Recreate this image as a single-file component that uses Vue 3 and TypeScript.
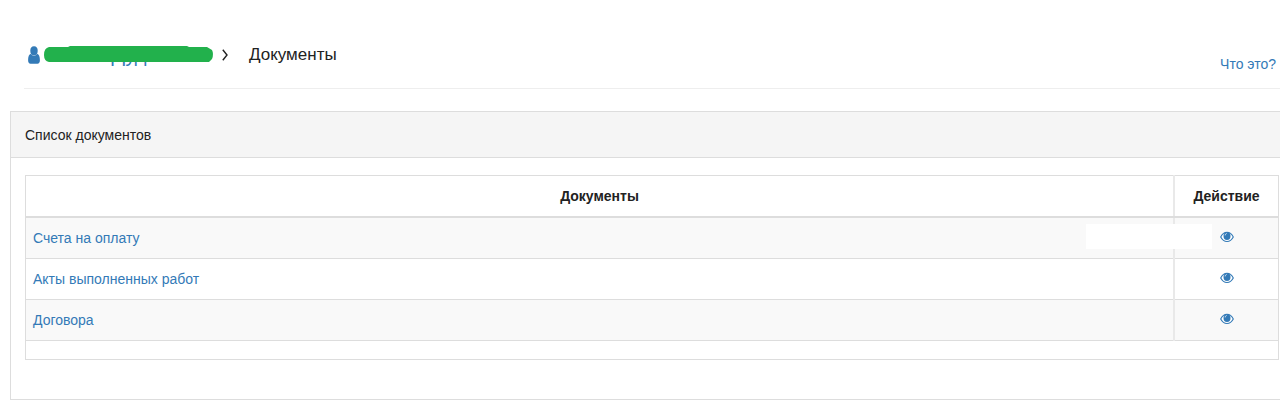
<script setup lang="ts">
interface DocumentRow {
  id: string
  title: string
  masked: boolean
}

const rows: DocumentRow[] = [
  { id: 'invoices', title: 'Счета на оплату', masked: true },
  { id: 'acts', title: 'Акты выполненных работ', masked: false },
  { id: 'contracts', title: 'Договора', masked: false },
]
</script>

<template>
  <main class="page">
    <header class="top">
      <nav class="crumbs" aria-label="Навигация">
        <a class="user" href="#user">
          <svg class="user-icon" viewBox="0 0 12 18" aria-hidden="true">
            <ellipse cx="6" cy="4.700" rx="3.700" ry="4.500" />
            <path d="M2.900 7.700C1 8 .1 10.800 .1 14.200C.1 16.500 1 17.700 2.500 17.700H9.500C11 17.700 11.900 16.500 11.900 14.200C11.900 10.800 11 8 9.100 7.700C8.300 8.900 7.300 9.600 6 9.600S3.700 8.900 2.900 7.700Z" />
          </svg>
          <span class="user-name">
            <span>Дуд</span>
            <svg class="marker" viewBox="0 0 170 16" preserveAspectRatio="none" aria-hidden="true">
              <path d="M5 1H24L26 0H143L145 1H163L168 4Q170 8 168 13L165 16H5Q0 15 0 9Q0 2 5 1Z" />
            </svg>
          </span>
        </a>
        <svg class="chevron" viewBox="0 0 6 12" aria-hidden="true">
          <path d="M.8 .8L5 6L.8 11.200" />
        </svg>
        <h1>Документы</h1>
      </nav>
      <a class="help" href="#help">Что это?</a>
    </header>

    <section class="panel">
      <h2 class="panel-head">Список документов</h2>
      <div class="panel-body">
        <table>
          <thead>
            <tr>
              <th scope="col">Документы</th>
              <th scope="col" class="action">Действие</th>
            </tr>
          </thead>
          <tbody>
            <tr v-for="row in rows" :key="row.id">
              <td><a :href="'#' + row.id">{{ row.title }}</a></td>
              <td class="action">
                <span v-if="row.masked" class="mask"></span>
                <a class="view" :href="'#view-' + row.id" :aria-label="'Просмотр: ' + row.title">
                  <svg viewBox="0 0 14 12" aria-hidden="true">
                    <path class="lid" d="M.7 6C2.300 2.900 4.500 1.300 7 1.300S11.700 2.900 13.300 6C11.700 9.100 9.500 10.500 7 10.500S2.300 9.100 .7 6Z" />
                    <ellipse class="iris" cx="7" cy="5" rx="3.500" ry="4" />
                    <path class="glint" d="M5.200 4.400C5.200 3.300 5.800 2.600 6.700 2.500" />
                  </svg>
                </a>
              </td>
            </tr>
            <tr class="last">
              <td colspan="2"></td>
            </tr>
          </tbody>
        </table>
      </div>
    </section>
  </main>
</template>

<style>
body {
  background: #fff;
}
</style>

<style scoped>
.page {
  padding: 33px 0 16px 10px;
  overflow: hidden;
  color: #222;
  font: 14px/24px "Liberation Sans", Arial, sans-serif;
}

a {
  color: #337ab7;
  text-decoration: none;
}

.top {
  display: flex;
  align-items: flex-end;
  justify-content: space-between;
  height: 55px;
  margin: 0 0 22px 14px;
  padding-right: 4px;
  border-bottom: 1px solid #eee;
}

.crumbs {
  display: flex;
  align-items: center;
  height: 44px;
  align-self: flex-start;
  padding-left: 4px;
}

.user {
  display: flex;
  align-items: center;
  gap: 4px;
}

.user-icon {
  width: 12px;
  height: 18px;
  fill: #337ab7;
}

.user-name {
  position: relative;
  width: 170px;
  text-align: center;
  font-size: 20px;
}

.marker {
  position: absolute;
  top: 3px;
  left: 0;
  width: 100%;
  height: 16px;
  fill: #22b14c;
}

.chevron {
  width: 6px;
  height: 12px;
  margin: 0 21px 0 8px;
  fill: none;
  stroke: #222;
  stroke-width: 1.4;
}

h1 {
  margin: 0;
  font-size: 17px;
  font-weight: 400;
}

.help {
  margin-bottom: 12px;
}

.panel {
  border: 1px solid #ddd;
  border-right: 0;
}

.panel-head {
  margin: 0;
  padding: 11px 14px 10px;
  border-bottom: 1px solid #ddd;
  background: #f5f5f5;
  font-size: 14px;
  font-weight: 400;
}

.panel-body {
  padding: 17px 1px 39px 14px;
}

table {
  width: 100%;
  border-collapse: collapse;
  table-layout: fixed;
}

th,
td {
  height: 24px;
  padding: 8px 7px;
  border: 1px solid #ddd;
  text-align: left;
}

th {
  border-bottom-width: 2px;
  text-align: center;
}

.action {
  position: relative;
  width: 89px;
  border-left: 2px solid #e9e9e9;
  text-align: center;
}

tbody tr:nth-child(odd) {
  background: #f9f9f9;
}

.last td {
  height: 18px;
  padding: 0;
}

tbody .last {
  background: #fff;
}

.view {
  display: block;
  padding: 5px 0 7px;
}

.view svg {
  display: block;
  width: 14px;
  height: 12px;
  margin: 0 auto;
}

.lid {
  fill: #fff;
  stroke: #337ab7;
  stroke-width: 1.1;
}

.iris {
  fill: #337ab7;
}

.glint {
  fill: none;
  stroke: #fff;
  stroke-width: .8;
}

.mask {
  position: absolute;
  top: 6px;
  right: 66px;
  width: 126px;
  height: 25px;
  background: #fff;
}
</style>
